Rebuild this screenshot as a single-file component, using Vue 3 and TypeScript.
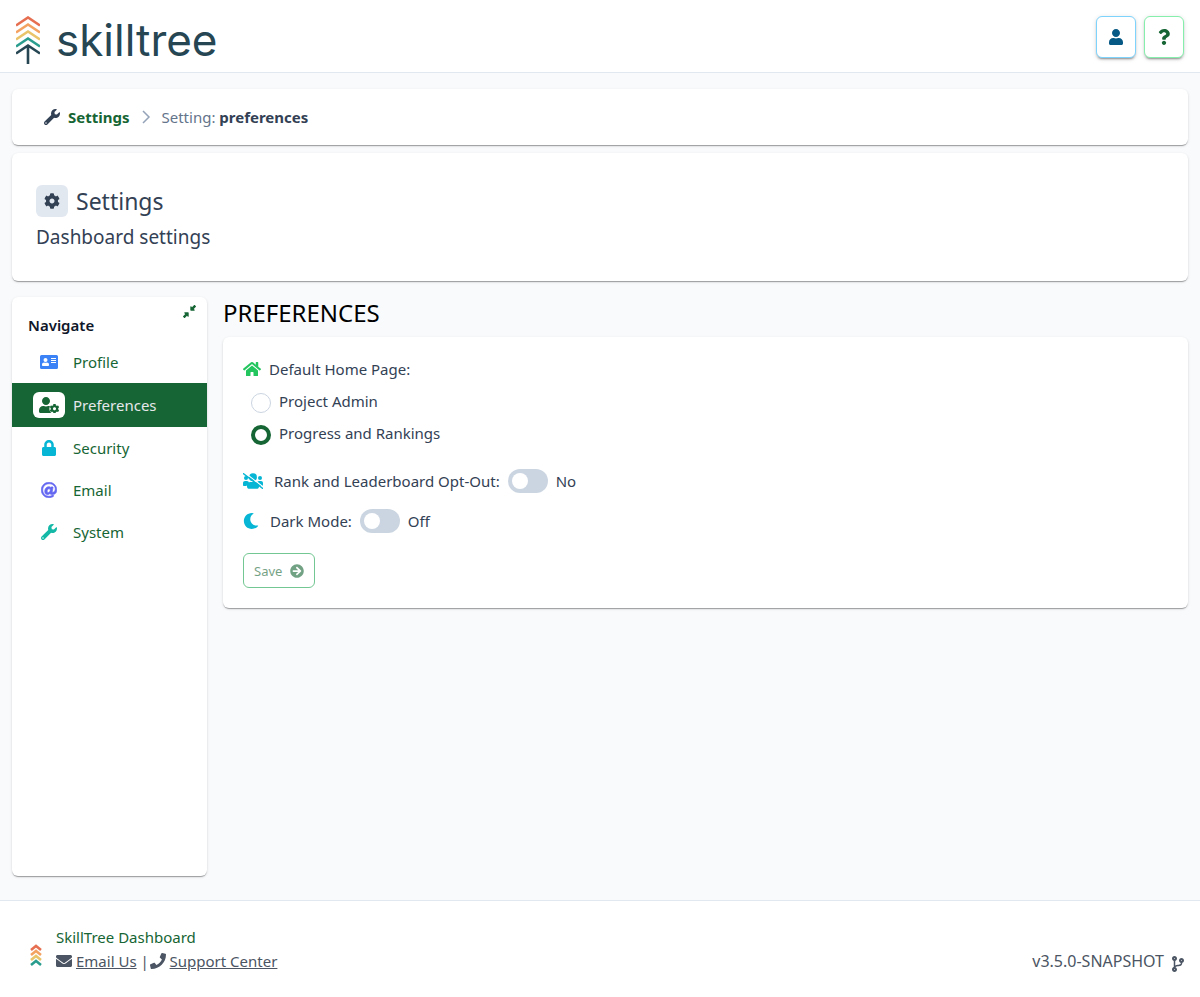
<script setup lang="ts">
import { ref } from 'vue'

interface Icon {
  box: string
  d: string
}

const COG =
  'M487.4 315.7l-42.6-24.6c4.3-23.2 4.3-47 0-70.2l42.6-24.6c4.9-2.8 7.1-8.6 5.5-14-11.1-35.6-30-67.8-54.7-94.6-3.8-4.1-10-5.1-14.8-2.3L380.8 110c-17.9-15.4-38.5-27.3-60.8-35.1V25.8c0-5.6-3.9-10.5-9.4-11.7-36.7-8.2-74.3-7.8-109.2 0-5.5 1.2-9.4 6.1-9.4 11.7V75c-22.2 7.9-42.8 19.8-60.8 35.1L88.7 85.5c-4.9-2.8-11-1.9-14.8 2.3-24.7 26.7-43.6 58.9-54.7 94.6-1.7 5.4.6 11.2 5.5 14L67.3 221c-4.3 23.2-4.3 47 0 70.2l-42.6 24.6c-4.9 2.8-7.1 8.6-5.5 14 11.1 35.6 30 67.8 54.7 94.6 3.8 4.1 10 5.1 14.8 2.3l42.6-24.6c17.9 15.4 38.5 27.3 60.8 35.1v49.2c0 5.6 3.9 10.5 9.4 11.7 36.7 8.2 74.3 7.8 109.2 0 5.5-1.2 9.4-6.1 9.4-11.7v-49.2c22.2-7.9 42.8-19.8 60.8-35.1l42.6 24.6c4.9 2.8 11 1.9 14.8-2.3 24.7-26.7 43.6-58.9 54.7-94.6 1.5-5.5-.7-11.3-5.6-14.1zM256 336c-44.1 0-80-35.9-80-80s35.9-80 80-80 80 35.9 80 80-35.9 80-80 80z'
const USER =
  'M224 256c70.7 0 128-57.3 128-128S294.7 0 224 0 96 57.3 96 128s57.3 128 128 128zm89.6 32h-16.7c-22.2 10.2-46.9 16-72.9 16s-50.6-5.8-72.9-16h-16.7C60.2 288 0 348.2 0 422.4V464c0 26.5 21.5 48 48 48h352c26.5 0 48-21.5 48-48v-41.6c0-74.2-60.2-134.4-134.4-134.4z'
const WRENCH =
  'M507.73 109.1c-2.24-9.03-13.54-12.09-20.12-5.51l-74.36 74.36-67.88-11.31-11.31-67.88 74.36-74.36c6.62-6.62 3.43-17.9-5.66-20.16-47.38-11.74-99.55.91-136.58 37.93-39.64 39.64-50.55 97.1-34.05 147.2L18.74 402.76c-24.99 24.99-24.99 65.51 0 90.5 24.99 24.99 65.51 24.99 90.5 0l213.21-213.21c50.12 16.71 107.47 5.68 147.37-34.22 37.07-37.07 49.7-89.32 37.91-136.73zM64 472c-13.25 0-24-10.75-24-24 0-13.26 10.75-24 24-24s24 10.74 24 24c0 13.25-10.75 24-24 24z'

const icons: Record<string, Icon> = {
  cog: { box: '0 0 512 512', d: COG },
  user: { box: '0 0 448 512', d: USER },
  wrench: { box: '0 0 512 512', d: WRENCH },
  question: {
    box: '0 0 384 512',
    d: 'M202.021 0C122.202 0 70.503 32.703 29.914 91.026c-7.363 10.58-5.093 25.086 5.178 32.874l43.138 32.709c10.373 7.865 25.132 6.026 33.253-4.148 25.049-31.381 43.63-49.449 82.757-49.449 30.764 0 68.816 19.799 68.816 49.631 0 22.552-18.617 34.134-48.993 51.164-35.423 19.86-82.299 44.576-82.299 106.405V320c0 13.255 10.745 24 24 24h72.471c13.255 0 24-10.745 24-24v-5.773c0-42.86 125.268-44.645 125.268-160.627C377.504 66.256 286.902 0 202.021 0zM192 373.459c-38.196 0-69.271 31.075-69.271 69.271 0 38.195 31.075 69.27 69.271 69.27s69.271-31.075 69.271-69.271-31.075-69.27-69.271-69.27z',
  },
  card: {
    box: '0 0 576 512',
    d: 'M48 32h480a48 48 0 0 1 48 48v352a48 48 0 0 1-48 48H48a48 48 0 0 1-48-48V80a48 48 0 0 1 48-48zM176 128a64 64 0 1 0 0 128a64 64 0 1 0 0-128zM131 272c-38 0-67 27-67 60v20c0 18 10 32 22 32h180c12 0 22-14 22-32v-20c0-33-29-60-67-60-30 14-60 14-90 0zM352 128v32h160v-32zM352 192v32h160v-32zM352 256v32h160v-32z',
  },
  lock: {
    box: '0 0 448 512',
    d: 'M400 224h-24v-72C376 68.2 307.8 0 224 0S72 68.2 72 152v72H48c-26.5 0-48 21.5-48 48v192c0 26.5 21.5 48 48 48h352c26.5 0 48-21.5 48-48V272c0-26.5-21.5-48-48-48zm-104 0H152v-72c0-39.7 32.3-72 72-72s72 32.3 72 72v72z',
  },
  at: {
    box: '0 0 512 512',
    d: 'M256 8C118.9 8 8 118.9 8 256c0 137 110.9 248 248 248 52.9 0 104.7-17 147-48.3 5.5-4 6.4-12 2-17.2l-15.2-18.6c-4-5-11.2-5.8-16.4-2C339.5 442.5 298.2 456 256 456c-110.3 0-200-89.7-200-200S145.700 56 256 56c109.500 0 200 65 200 168 0 65-36 100.300-76.300 100.300-19.800 0-20.500-13-16.600-32.300l23.600-121.700c1.500-7.400-4.200-14.300-11.700-14.300h-45c-5.800 0-10.800 4.200-11.800 9.900l-1.600 9c-15.500-18.500-39-26.500-61-26.500-74 0-137 62-137 151 0 65 36 105.500 94 105.500 27 0 57-15.500 74.500-38.500 9.500 34 40.500 34 70.500 34C471.400 400 504 330.400 504 256 504 103.900 389.300 8 256 8zM234.700 336c-24 0-38.400-16-38.400-43 0-47.200 32.500-76.300 61.500-76.300 25.400 0 38.800 17.400 38.800 43 0 38-29.400 76.300-61.900 76.300z',
  },
  home: {
    box: '0 0 576 512',
    d: 'M280.37 148.26L96 300.11V464a16 16 0 0 0 16 16l112.06-.29a16 16 0 0 0 15.92-16V368a16 16 0 0 1 16-16h64a16 16 0 0 1 16 16v95.64a16 16 0 0 0 16 16.05L464 480a16 16 0 0 0 16-16V300L295.67 148.26a12.19 12.19 0 0 0-15.3 0zM571.6 251.47L488 182.56V44.05a12 12 0 0 0-12-12h-56a12 12 0 0 0-12 12v72.61L318.47 43a48 48 0 0 0-61 0L4.34 251.47a12 12 0 0 0-1.6 16.9l25.5 31A12 12 0 0 0 45.15 301l235.22-193.74a12.19 12.19 0 0 1 15.3 0L530.9 301a12 12 0 0 0 16.9-1.6l25.5-31a12 12 0 0 0-1.7-16.93z',
  },
  moon: {
    box: '0 0 512 512',
    d: 'M283.211 512c78.962 0 151.079-35.925 198.857-94.792 7.068-8.708-.639-21.43-11.562-19.35-124.203 23.654-238.262-71.576-238.262-196.954 0-72.222 38.662-138.635 101.498-174.394 9.686-5.512 7.25-20.197-3.756-22.23A258.156 258.156 0 0 0 283.211 0c-141.309 0-256 114.511-256 256 0 141.309 114.511 256 256 256z',
  },
  arrow: {
    box: '0 0 512 512',
    d: 'M256 8c137 0 248 111 248 248S393 504 256 504 8 393 8 256 119 8 256 8zm-28.9 143.6l75.5 72.4H120c-13.3 0-24 10.7-24 24v16c0 13.3 10.7 24 24 24h182.6l-75.5 72.4c-9.7 9.3-9.9 24.8-.4 34.3l11 10.9c9.4 9.4 24.6 9.4 33.9 0L404.3 273c9.4-9.4 9.4-24.6 0-33.9L271.6 106.3c-9.4-9.4-24.6-9.4-33.9 0l-11 10.9c-9.5 9.6-9.3 25.1.4 34.4z',
  },
  envelope: {
    box: '0 0 512 512',
    d: 'M502.3 190.8c3.9-3.1 9.7-.2 9.7 4.7V400c0 26.5-21.5 48-48 48H48c-26.5 0-48-21.5-48-48V195.6c0-5 5.7-7.8 9.7-4.7 22.4 17.4 52.1 39.5 154.1 113.6 21.1 15.4 56.7 47.8 92.2 47.6 35.7.3 72-32.8 92.3-47.6 102-74.1 131.6-96.3 154-113.7zM256 320c23.2.4 56.6-29.2 73.4-41.4 132.7-96.3 142.8-104.7 173.4-128.7 5.8-4.5 9.2-11.5 9.2-18.9v-19c0-26.5-21.5-48-48-48H48c-26.5 0-48 21.5-48 48v19c0 7.4 3.4 14.3 9.2 18.9 30.6 23.9 40.7 32.4 173.4 128.7 16.8 12.2 50.2 41.8 73.4 41.4z',
  },
  phone: {
    box: '0 0 512 512',
    d: 'M493.4 24.6l-104-24c-11.3-2.6-22.9 3.3-27.5 13.9l-48 112c-4.2 9.8-1.4 21.3 6.9 28l60.6 49.6c-36 76.7-98.9 140.5-177.2 177.2l-49.6-60.6c-6.8-8.3-18.2-11.1-28-6.9l-112 48C3.9 366.5-2 378.1.6 389.4l24 104C27.1 504.2 36.7 512 48 512c256.1 0 464-207.5 464-464 0-11.2-7.7-20.9-18.6-23.4z',
  },
  branch: {
    box: '0 0 384 512',
    d: 'M384 144c0-44.2-35.8-80-80-80s-80 35.8-80 80c0 36.4 24.3 67.1 57.5 76.8-.6 16.1-4.2 28.5-11 36.9-15.4 19.2-49.3 22.4-85.2 25.7-28.2 2.6-57.4 5.4-81.3 16.9v-144c32.5-10.2 56-40.5 56-76.3 0-44.2-35.8-80-80-80S0 35.8 0 80c0 35.8 23.5 66.1 56 76.3v199.3C23.5 365.9 0 396.2 0 432c0 44.2 35.8 80 80 80s80-35.8 80-80c0-34-21.2-63.1-51.2-74.6 3.1-5.2 7.8-9.8 14.9-13.4 16.2-8.2 40.4-10.4 66.1-12.8 42.2-3.9 90-8.4 118.2-43.4 14-17.4 21.1-39.8 21.6-67.9 31.6-10.8 54.4-40.7 54.4-75.9zM80 64c8.8 0 16 7.2 16 16s-7.2 16-16 16-16-7.2-16-16 7.2-16 16-16zm0 384c-8.8 0-16-7.2-16-16s7.2-16 16-16 16 7.2 16 16-7.2 16-16 16zm224-320c8.8 0 16 7.2 16 16s-7.2 16-16 16-16-7.2-16-16 7.2-16 16-16z',
  },
  compress: {
    box: '0 0 512 512',
    d: 'M508 48L464 4a18 18 0 0 0-25 0L355 88 328 55c-15-15-40-4-40 17v128c0 13 11 24 24 24h128c21 0 32-25 17-40l-33-27 84-84a18 18 0 0 0 0-25zM4 464l44 44a18 18 0 0 0 25 0l84-84 27 33c15 15 40 4 40-17V312c0-13-11-24-24-24H72c-21 0-32 25-17 40l33 27-84 84a18 18 0 0 0 0 25z',
  },
}

const navItems = [
  { id: 'profile', label: 'Profile', icon: 'card' },
  { id: 'preferences', label: 'Preferences', icon: 'userCog' },
  { id: 'security', label: 'Security', icon: 'lock' },
  { id: 'email', label: 'Email', icon: 'at' },
  { id: 'system', label: 'System', icon: 'wrench' },
]
const current = ref('preferences')
const homePage = ref('progress')
const optOut = ref(false)
const darkMode = ref(false)
</script>

<template>
  <div class="page">
    <header class="top">
      <a class="brand" href="#" aria-label="skilltree">
        <svg class="tree" viewBox="0 0 24 48" fill="none" stroke-width="2.6">
          <path d="M0 9.500L12 1.500L24 9.500" stroke="#e76f51" />
          <path d="M0 16.500L12 8.500L24 16.500" stroke="#f4a261" />
          <path d="M0 23.500L12 15.500L24 23.500" stroke="#e9c46a" />
          <path d="M0 30.500L12 22.500L24 30.500" stroke="#2a9d8f" />
          <path d="M0 37.500L12 29.500L24 37.500M12 30V48" stroke="#264653" />
        </svg>
        <span class="word">skilltree</span>
      </a>
      <div class="actions">
        <button class="square blue" type="button" aria-label="User menu">
          <svg class="i16" :viewBox="icons.user.box"><path :d="icons.user.d" /></svg>
        </button>
        <button class="square green" type="button" aria-label="Help">
          <svg class="i16" :viewBox="icons.question.box"><path :d="icons.question.d" /></svg>
        </button>
      </div>
    </header>

    <main class="content">
      <nav class="card crumbs" aria-label="Breadcrumb">
        <svg class="i16" :viewBox="icons.wrench.box"><path :d="icons.wrench.d" /></svg>
        <a href="#">Settings</a>
        <svg class="chevron" viewBox="0 0 10 16"><path d="M2 2l6 6-6 6" /></svg>
        <span class="trail">Setting: <b>preferences</b></span>
      </nav>

      <section class="card title">
        <div class="title-row">
          <span class="tile"><svg class="i16" :viewBox="icons.cog.box"><path :d="icons.cog.d" /></svg></span>
          <h1>Settings</h1>
        </div>
        <p>Dashboard settings</p>
      </section>

      <div class="columns">
        <nav class="card side" aria-label="Navigate">
          <div class="side-top">
            <h2>Navigate</h2>
            <button type="button" class="collapse" aria-label="Collapse navigation">
              <svg viewBox="0 0 512 512"><path :d="icons.compress.d" /></svg>
            </button>
          </div>
          <a
            v-for="item in navItems"
            :key="item.id"
            href="#"
            class="item"
            :class="[item.id, { active: item.id === current }]"
            @click.prevent="current = item.id"
          >
            <span class="item-icon">
              <svg v-if="item.icon === 'userCog'" class="user-cog" viewBox="0 0 640 512">
                <path :d="USER" />
                <circle cx="496" cy="376" r="165" fill="#fff" />
                <path :d="COG" transform="translate(336 216) scale(.625)" />
              </svg>
              <svg v-else class="i16" :viewBox="icons[item.icon].box">
                <path :d="icons[item.icon].d" fill-rule="evenodd" />
              </svg>
            </span>
            {{ item.label }}
          </a>
        </nav>

        <section class="main">
          <h2>PREFERENCES</h2>
          <form class="card form" @submit.prevent>
            <fieldset>
              <legend>
                <svg class="i16 home" :viewBox="icons.home.box"><path :d="icons.home.d" /></svg>
                Default Home Page:
              </legend>
              <label class="choice">
                <input v-model="homePage" type="radio" name="home" value="admin" />
                <span>Project Admin</span>
              </label>
              <label class="choice">
                <input v-model="homePage" type="radio" name="home" value="progress" />
                <span>Progress and Rankings</span>
              </label>
            </fieldset>

            <div class="toggle-row">
              <svg class="cyan users" viewBox="0 0 640 512">
                <circle cx="320" cy="132" r="124" />
                <circle cx="96" cy="160" r="64" />
                <circle cx="544" cy="160" r="64" />
                <path d="M64 256h64c36 0 62 26 64 60-48 26-72 62-76 100H32c-18 0-32-14-32-32v-64c0-36 28-64 64-64zM512 256h64c36 0 64 28 64 64v64c0 18-14 32-32 32h-84c-4-38-28-74-76-100 2-34 28-60 64-60zM240 288h160c66 0 112 48 112 112v32c0 26-22 72-48 72H176c-26 0-48-46-48-72v-32c0-64 46-112 112-112z" />
                <path d="M60 -8L660 456" stroke="#fff" stroke-width="36" />
                <path d="M18 24L622 488" stroke="#06b6d4" stroke-width="50" stroke-linecap="round" />
              </svg>
              <label for="opt-out">Rank and Leaderboard Opt-Out:</label>
              <input id="opt-out" v-model="optOut" class="switch" type="checkbox" role="switch" />
              <span>{{ optOut ? 'Yes' : 'No' }}</span>
            </div>

            <div class="toggle-row">
              <svg class="i16 cyan moon" :viewBox="icons.moon.box"><path :d="icons.moon.d" /></svg>
              <label for="dark-mode">Dark Mode:</label>
              <input id="dark-mode" v-model="darkMode" class="switch" type="checkbox" role="switch" />
              <span>{{ darkMode ? 'On' : 'Off' }}</span>
            </div>

            <button class="save" type="submit" disabled>
              Save
              <svg :viewBox="icons.arrow.box"><path :d="icons.arrow.d" /></svg>
            </button>
          </form>
        </section>
      </div>
    </main>

    <footer>
      <div class="foot-left">
        <svg class="mini-tree" viewBox="0 0 12 24" fill="none" stroke-width="2.6">
          <path d="M1 7L6 3L11 7" stroke="#e76f51" />
          <path d="M1 12L6 8L11 12" stroke="#f4a261" />
          <path d="M1 17L6 13L11 17" stroke="#e9c46a" />
          <path d="M1 22L6 18L11 22" stroke="#2a9d8f" />
        </svg>
        <div>
          <div class="product">SkillTree Dashboard</div>
          <div class="contact">
            <svg class="i16" :viewBox="icons.envelope.box"><path :d="icons.envelope.d" /></svg>
            <a href="#">Email Us</a>
            <span class="bar">|</span>
            <svg class="i16" :viewBox="icons.phone.box"><path :d="icons.phone.d" /></svg>
            <a href="#">Support Center</a>
          </div>
        </div>
      </div>
      <div class="version">
        v3.5.0-SNAPSHOT
        <svg class="i16" :viewBox="icons.branch.box"><path :d="icons.branch.d" /></svg>
      </div>
    </footer>
  </div>
</template>

<style>
body {
  margin: 0;
  background: #f8fafc;
}
</style>

<style scoped>
* {
  box-sizing: border-box;
}
.page {
  min-height: 100vh;
  display: flex;
  flex-direction: column;
  font-family: "Noto Sans", "Open Sans", sans-serif;
  font-size: 15px;
  line-height: 24px;
  color: #334155;
}
h1, h2, p, fieldset {
  margin: 0;
  padding: 0;
  border: 0;
  font-weight: 400;
}
button, input {
  font: inherit;
  margin: 0;
}
svg {
  flex: none;
  fill: currentColor;
}
.i16 {
  height: 16px;
  width: auto;
}
.top {
  display: flex;
  justify-content: space-between;
  align-items: center;
  height: 73px;
  padding: 0 16px;
  background: #fff;
  border-bottom: 1px solid #e2e8f0;
}
.brand {
  display: flex;
  align-items: center;
  gap: 16px;
  color: #264653;
  text-decoration: none;
}
.tree {
  width: 24px;
  height: 48px;
  margin-top: 8px;
  fill: none;
}
.word {
  font-family: Inter, Lato, sans-serif;
  font-size: 44px;
  font-weight: 400;
  line-height: 48px;
  margin-top: 8px;
}
.actions {
  display: flex;
  gap: 8px;
  margin-top: 2px;
}
.square {
  display: flex;
  align-items: center;
  justify-content: center;
  width: 40px;
  height: 42px;
  padding: 0;
  background: #fff;
  border: 1px solid;
  border-radius: 6px;
  box-shadow: 0 3px 1px -2px rgba(0, 0, 0, .2), 0 2px 2px rgba(0, 0, 0, .14), 0 1px 5px rgba(0, 0, 0, .12);
}
.blue {
  border-color: #7dd3fc;
  color: #075985;
}
.green {
  border-color: #86efac;
  color: #166534;
}
.content {
  flex: 1;
  display: flex;
  flex-direction: column;
  padding: 16px 12px 24px;
}
.card {
  background: #fff;
  border-radius: 6px;
  box-shadow: 0 2px 1px -1px rgba(0, 0, 0, .2), 0 1px 1px rgba(0, 0, 0, .14), 0 1px 3px rgba(0, 0, 0, .12);
}
.crumbs {
  display: flex;
  align-items: center;
  gap: 8px;
  padding: 16px 32px;
}
.crumbs a {
  color: #166534;
  font-weight: 700;
  text-decoration: none;
}
.chevron {
  width: 10px;
  height: 16px;
  margin: 0 3px;
  fill: none;
  stroke: #94a3b8;
  stroke-width: 1.5;
}
.trail {
  color: #64748b;
}
.trail b {
  color: #334155;
  font-weight: 700;
}
.title {
  margin-top: 8px;
  padding: 32px 24px 28px;
}
.title-row {
  display: flex;
  align-items: center;
  gap: 8px;
}
.tile {
  display: flex;
  align-items: center;
  justify-content: center;
  width: 32px;
  height: 32px;
  border-radius: 6px;
  background: #e2e8f0;
}
h1 {
  font-size: 23px;
  line-height: 32px;
}
.title p {
  margin-top: 4px;
  font-size: 19px;
  line-height: 32px;
}
.columns {
  flex: 1;
  display: flex;
  gap: 16px;
  margin-top: 16px;
}
.side {
  width: 195px;
  flex: none;
}
.side-top {
  display: flex;
  justify-content: space-between;
  padding: 8px 11px 0 16px;
  height: 44px;
}
.side-top h2 {
  margin-top: 8px;
  font-size: 15px;
  font-weight: 600;
  color: #0f172a;
}
.collapse {
  width: 13px;
  height: 13px;
  padding: 0;
  border: 0;
  background: none;
  color: #166534;
}
.collapse svg {
  display: block;
  width: 13px;
  height: 13px;
}
.item {
  display: flex;
  align-items: center;
  gap: 8px;
  height: 42px;
  padding: 0 21px;
  color: #166534;
  text-decoration: none;
}
.item-icon {
  display: flex;
  align-items: center;
  justify-content: center;
  width: 32px;
  height: 26px;
  border-radius: 6px;
}
.profile .item-icon { color: #3b82f6; }
.security .item-icon { color: #06b6d4; }
.email .item-icon {
  color: #6366f1;
  stroke: #6366f1;
  stroke-width: 20;
}
.system .item-icon { color: #14b8a6; }
.active {
  height: 44px;
  background: #166534;
  color: #e5e7eb;
}
.active .item-icon {
  background: #fff;
  color: #166534;
}
.user-cog {
  width: 20px;
  height: 16px;
}
.main {
  flex: 1;
  min-width: 0;
}
.main h2 {
  color: #000;
  font-size: 24px;
  line-height: 32px;
  margin-bottom: 8px;
}
.form {
  display: flex;
  flex-direction: column;
  align-items: flex-start;
  gap: 16px;
  padding: 20px;
}
legend {
  display: flex;
  align-items: center;
  gap: 8px;
  padding: 0;
  margin-bottom: 8px;
}
.home {
  color: #22c55e;
}
.choice {
  display: flex;
  gap: 8px;
  height: 24px;
  margin: 0 8px 8px;
}
.choice input {
  appearance: none;
  width: 20px;
  height: 20px;
  margin-top: 4px;
  border: 1px solid #cbd5e1;
  border-radius: 50%;
  background: #fff;
}
.choice input:checked {
  border: 4px solid #166534;
}
fieldset .choice:last-child {
  margin-bottom: 0;
}
.toggle-row {
  display: flex;
  align-items: center;
  gap: 8px;
}
.form fieldset + .toggle-row {
  margin-top: 8px;
}
.cyan {
  color: #06b6d4;
}
.users {
  width: 20px;
  height: 16px;
  margin-right: 3px;
}
.moon {
  margin-right: 3px;
}
.switch {
  appearance: none;
  display: flex;
  align-items: center;
  width: 40px;
  height: 24px;
  padding: 0 4px;
  border-radius: 12px;
  background: #cbd5e1;
}
.switch::before {
  content: "";
  width: 16px;
  height: 16px;
  border-radius: 50%;
  background: #fff;
}
.switch:checked {
  justify-content: flex-end;
  background: #166534;
}
.save {
  display: flex;
  align-items: center;
  gap: 8px;
  height: 35px;
  margin-top: 4px;
  padding: 0 10px;
  border: 1px solid #16a34a;
  border-radius: 6px;
  background: #fff;
  color: #166534;
  font-size: 13px;
  opacity: .6;
}
.save svg {
  width: 14px;
  height: 14px;
}
footer {
  display: flex;
  justify-content: space-between;
  align-items: flex-end;
  height: 97px;
  padding: 0 16px 24px;
  background: #fff;
  border-top: 1px solid #e2e8f0;
  color: #4b5563;
}
.foot-left {
  display: flex;
  align-items: center;
  gap: 14px;
  padding-left: 14px;
}
.mini-tree {
  width: 12px;
  height: 24px;
  margin-top: 12px;
  fill: none;
}
.product {
  color: #166534;
}
.contact {
  display: flex;
  align-items: center;
  gap: 4px;
}
.contact a {
  color: inherit;
}
.bar {
  width: 5px;
  text-align: center;
}
.version {
  display: flex;
  gap: 8px;
  align-items: center;
  font-size: 16px;
}
.version svg {
  margin-top: 6px;
}
</style>
